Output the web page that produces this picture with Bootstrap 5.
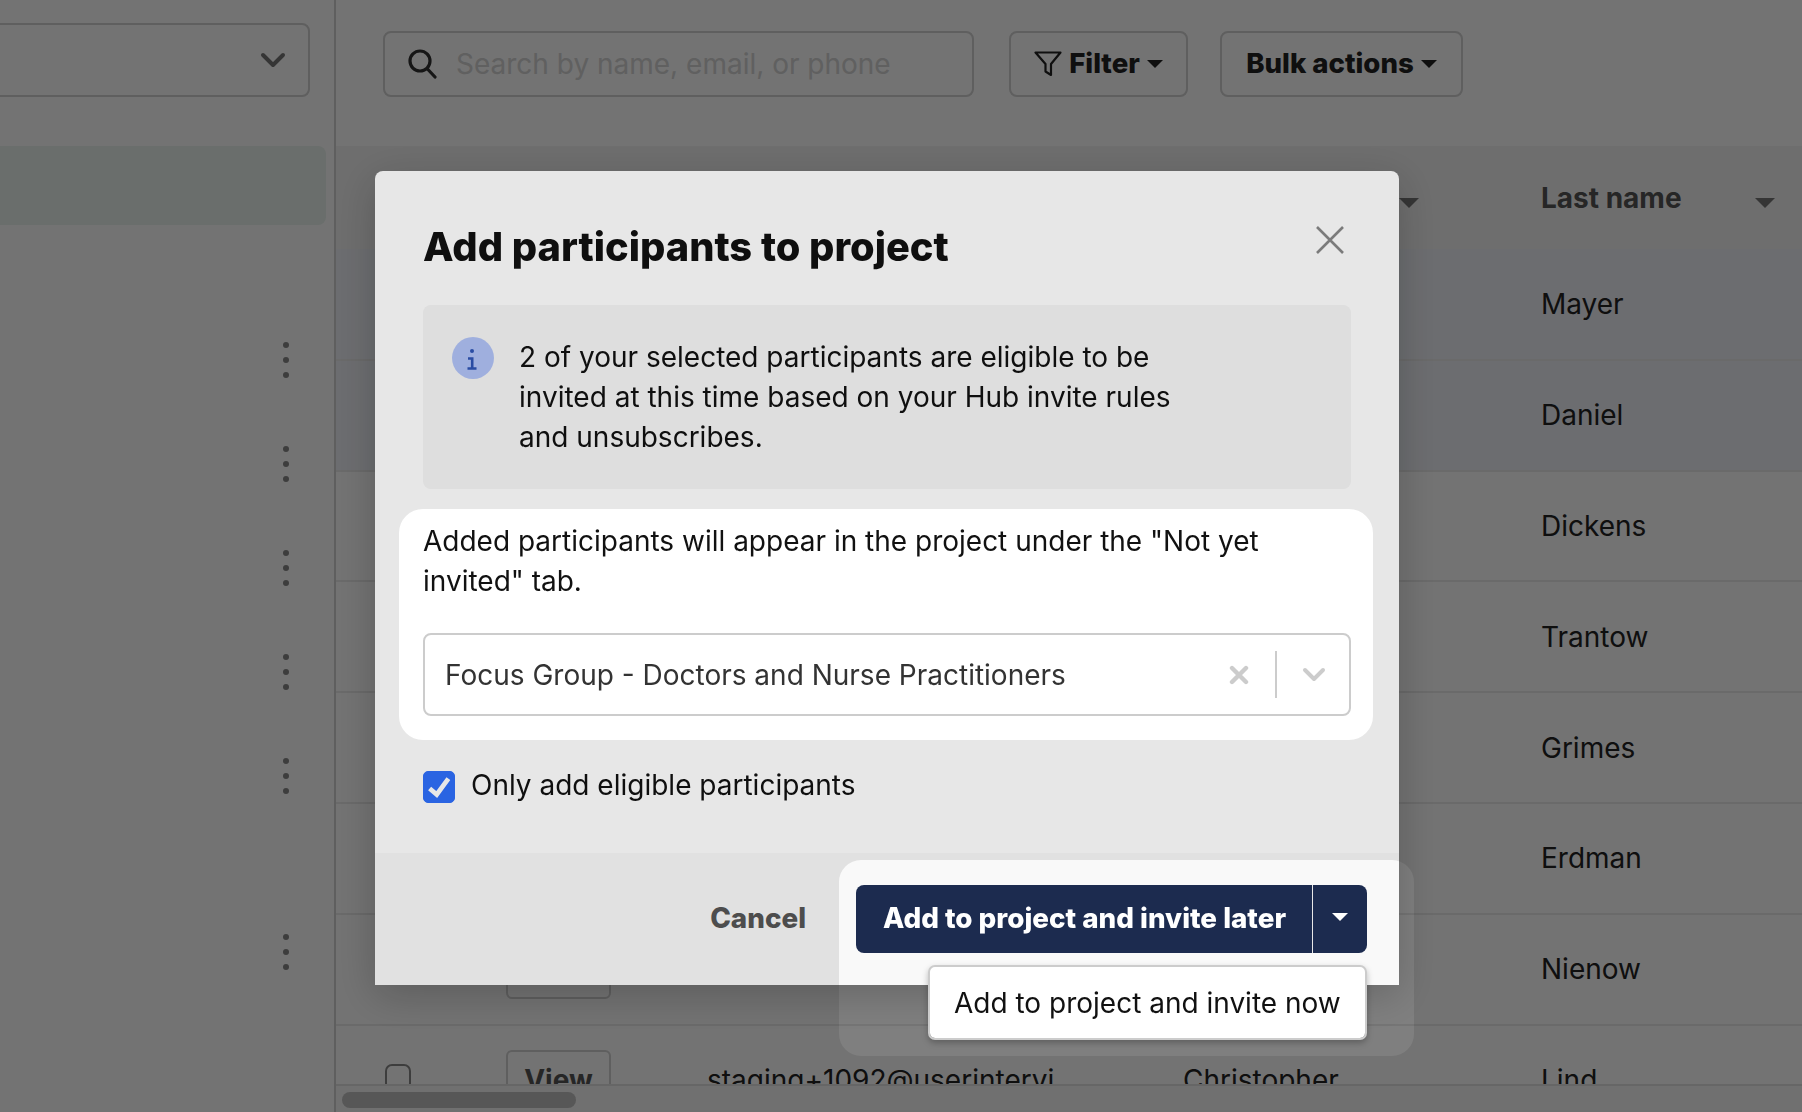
<!DOCTYPE html>
<html lang="en">
<head>
<meta charset="utf-8">
<title>Add participants to project</title>
<link href="https://cdn.jsdelivr.net/npm/bootstrap@5.3.0/dist/css/bootstrap.min.css" rel="stylesheet">
<style>
html,body{height:1112px;overflow:hidden;}
body{font-family:Inter,"Liberation Sans",sans-serif;font-size:28px;line-height:40px;color:#222;background:#fff;}
.app-shell{height:1112px;}
.side-pane{width:336px;flex:none;border-right:2px solid #d2d2d2;padding-top:23px;overflow:hidden;}
.side-select{height:74px;width:330px;margin-left:-20px;border:2px solid #d2d2d2;border-radius:8px;padding-right:22px;}
.side-active{height:79px;width:346px;margin:49px 0 0 -20px;border-radius:8px;background:#ecf5f0;}
.side-list{margin-top:83px;}
.side-row{height:104px;padding-right:45px;}
.side-row-far{margin-top:72px;}
.main-pane{min-width:0;}
.tool-row{height:146px;padding:31px 0 0 47px;gap:32px;flex:none;}
.search-box{width:591px;height:66px;border:2px solid #d2d2d2;border-radius:8px;padding-left:23px;gap:19px;}
.search-box input{border:0;outline:0;background:transparent;flex:1;font-size:28px;padding:0;min-width:0;}
.search-box input::placeholder{color:#d4d4d4;opacity:1;}
.tool-btn{height:66px;border:2px solid #d2d2d2;border-radius:8px;font-size:27.6px;font-weight:800;color:#222;line-height:1;display:inline-flex;align-items:center;justify-content:center;padding:0;}
.tool-btn.filter-btn{width:179px;margin-left:3px;}
.filter-shape{margin-right:7px;}
.tool-btn.bulk-btn{width:243px;}
.table-clip{flex:1;overflow:hidden;min-height:0;}
.people-table{table-layout:fixed;width:1466px;margin:0;border-collapse:collapse;--bs-table-bg:transparent;--bs-table-color:#222;}
.people-table th,.people-table td{padding:0 0 0 15px;vertical-align:middle;border-bottom:2px solid #eaeaea;font-size:28px;line-height:40px;white-space:nowrap;overflow:hidden;}
.people-table thead th{height:103px;background:#f5f5f5;font-weight:700;color:#555;border-bottom:0;}
.people-table tbody td{height:110.8px;}
.people-table .chosen td{background:#f0f3f9;}
.people-table td.tick-cell,.people-table th.tick-cell{padding-left:49px;}
.tick-box{display:block;width:26px;height:26px;margin:0 0 6px;border:2px solid #888;border-radius:4px;}
.view-btn{display:block;width:105px;height:60px;margin-left:-1px;border:2px solid #d2d2d2;border-radius:6px;font-size:28px;font-weight:700;color:#555;padding:0;}
.sort-head{display:flex;justify-content:space-between;align-items:center;width:234px;}
.sort-head-wide{width:236px;}
.sort-caret{width:0;height:0;border-left:10px solid transparent;border-right:10px solid transparent;border-top:10px solid #777;margin-top:10px;}
.scroll-track{height:28px;flex:none;background:#f8f8f8;border-top:2px solid #e2e2e2;padding:6px 0 0 6px;}
.scroll-thumb{width:234px;height:16px;border-radius:8px;background:#c2c2c2;}
.dialog-place{max-width:1024px;margin:171px 0 0 375px;}
.dialog-box{border:0;border-radius:8px 8px 0 0;background:#fff;box-shadow:0 10px 40px rgba(0,0,0,.2);color:#111;}
.dialog-head{padding:48px 48px 0;height:134px;border:0;align-items:flex-start;}
.dialog-title{font-size:39.8px;line-height:56px;font-weight:800;margin:0;color:#111;}
.close-x{margin-top:6px;margin-right:6px;border:0;padding:0;line-height:0;background:none;}
.dialog-main{padding:0 48px;height:548px;flex:none;}
.info-panel{height:184px;background:#f5f5f5;border-radius:8px;padding:32px 29px;gap:25px;}
.info-dot{width:42px;height:42px;flex:none;}
.info-copy{max-width:690px;}
.group-note{margin-top:32px;}
.group-picker{height:83px;margin-top:32px;border:2px solid #ccc;border-radius:8px;padding-left:20px;color:#333;}
.picker-rule{width:2px;height:47px;background:#ccc;margin:0 25px 0 26px;}
.picker-arrow{margin-right:23px;}
.form-check.only-row{margin-top:55px;gap:16px;min-height:0;height:32px;}
.form-check .form-check-input.only-tick{width:32px;height:32px;margin:0;float:none;flex:none;border-radius:5px;background-color:#2f6ffa;border-color:#2f6ffa;background-size:100% 100%;background-image:url("data:image/svg+xml,%3Csvg xmlns='http://www.w3.org/2000/svg' viewBox='0 0 32 32'%3E%3Cpath d='M6 17.5l7.6 6.5L26 7' fill='none' stroke='%23fff' stroke-width='5'/%3E%3C/svg%3E");}
.only-text{margin-top:-4px;}
.dialog-foot{height:132px;padding:32px 32px 32px 0;background:#f9f9f9;border:0;border-radius:0;justify-content:flex-end;align-items:flex-start;flex-wrap:nowrap;gap:50px;}
.dialog-foot>*{margin:0;}
.cancel-link{font-size:27.8px;font-weight:800;color:#555;padding:0;border:0;height:68px;}
.save-btn{background:#1c2b4f;border:0;color:#fff;font-size:27.8px;font-weight:800;height:68px;line-height:1;border-radius:8px;}
.save-btn:hover,.save-btn:active{background:#1c2b4f;color:#fff;}
.save-main{width:457px;padding:0;}
.save-more{width:55px;padding:0;border-left:1px solid #e8e8e8!important;}
.save-more::after{margin:0;}
.later-menu{position:absolute;top:80px;right:0;left:auto;width:439px;height:75px;padding:0;border:2px solid #ccc;border-radius:7px;box-shadow:0 3px 6px rgba(0,0,0,.25);font-size:28px;}
.later-menu .dropdown-item{height:71px;padding:0 24px;display:flex;align-items:center;color:#111;}
.spot-layer{position:fixed;inset:0;width:1802px;height:1112px;z-index:1080;pointer-events:none;}
</style>
</head>
<body>
<div class="app-shell d-flex">
  <aside class="side-pane">
    <div class="side-select d-flex align-items-center justify-content-end">
      <svg width="26" height="16" viewBox="0 0 26 16" fill="none" stroke="#777" stroke-width="4" stroke-linecap="round" stroke-linejoin="round"><path d="M3 3l10 10L23 3"/></svg>
    </div>
    <div class="side-active"></div>
    <div class="side-list">
      <div class="side-row d-flex align-items-center justify-content-end"><svg width="6" height="36" viewBox="0 0 6 36" fill="#888"><circle cx="3" cy="3" r="3"/><circle cx="3" cy="18" r="3"/><circle cx="3" cy="33" r="3"/></svg></div>
      <div class="side-row d-flex align-items-center justify-content-end"><svg width="6" height="36" viewBox="0 0 6 36" fill="#888"><circle cx="3" cy="3" r="3"/><circle cx="3" cy="18" r="3"/><circle cx="3" cy="33" r="3"/></svg></div>
      <div class="side-row d-flex align-items-center justify-content-end"><svg width="6" height="36" viewBox="0 0 6 36" fill="#888"><circle cx="3" cy="3" r="3"/><circle cx="3" cy="18" r="3"/><circle cx="3" cy="33" r="3"/></svg></div>
      <div class="side-row d-flex align-items-center justify-content-end"><svg width="6" height="36" viewBox="0 0 6 36" fill="#888"><circle cx="3" cy="3" r="3"/><circle cx="3" cy="18" r="3"/><circle cx="3" cy="33" r="3"/></svg></div>
      <div class="side-row d-flex align-items-center justify-content-end"><svg width="6" height="36" viewBox="0 0 6 36" fill="#888"><circle cx="3" cy="3" r="3"/><circle cx="3" cy="18" r="3"/><circle cx="3" cy="33" r="3"/></svg></div>
      <div class="side-row side-row-far d-flex align-items-center justify-content-end"><svg width="6" height="36" viewBox="0 0 6 36" fill="#888"><circle cx="3" cy="3" r="3"/><circle cx="3" cy="18" r="3"/><circle cx="3" cy="33" r="3"/></svg></div>
    </div>
  </aside>
  <main class="main-pane flex-grow-1 d-flex flex-column">
    <div class="tool-row d-flex align-items-start">
      <div class="search-box d-flex align-items-center">
        <svg width="29" height="30" viewBox="0 0 29 30" fill="none" stroke="#333" stroke-width="3.2" stroke-linecap="round"><circle cx="12" cy="12" r="10"/><path d="M19.5 20l7.5 8"/></svg>
        <input type="text" placeholder="Search by name, email, or phone" aria-label="Search">
      </div>
      <button type="button" class="btn tool-btn filter-btn dropdown-toggle">
        <svg class="filter-shape" width="28" height="26" viewBox="0 0 28 26" fill="none" stroke="#222" stroke-width="2.2" stroke-linejoin="round"><path d="M1.5 1.5h25L17 13v11l-5.5-3.5V13z"/></svg>Filter</button>
      <button type="button" class="btn tool-btn bulk-btn dropdown-toggle">Bulk actions</button>
    </div>
    <div class="table-clip">
      <table class="table people-table">
        <colgroup><col style="width:156px"><col style="width:200px"><col style="width:476px"><col style="width:358px"><col style="width:276px"></colgroup>
        <thead>
          <tr><th class="tick-cell"></th><th></th><th></th><th><div class="sort-head sort-head-wide"><span class="opacity-0"></span><span class="sort-caret"></span></div></th><th><div class="sort-head"><span>Last name</span><span class="sort-caret"></span></div></th></tr>
        </thead>
        <tbody>
          <tr class="chosen"><td class="tick-cell"></td><td></td><td></td><td></td><td>Mayer</td></tr>
          <tr class="chosen"><td class="tick-cell"></td><td></td><td></td><td></td><td>Daniel</td></tr>
          <tr><td class="tick-cell"></td><td></td><td></td><td></td><td>Dickens</td></tr>
          <tr><td class="tick-cell"></td><td></td><td></td><td></td><td>Trantow</td></tr>
          <tr><td class="tick-cell"></td><td></td><td></td><td></td><td>Grimes</td></tr>
          <tr><td class="tick-cell"></td><td></td><td></td><td></td><td>Erdman</td></tr>
          <tr><td class="tick-cell"></td><td><button class="btn view-btn" type="button" aria-label="View"></button></td><td></td><td></td><td>Nienow</td></tr>
          <tr><td class="tick-cell"><input class="form-check-input tick-box" type="checkbox" aria-label="Select"></td><td><button class="btn view-btn" type="button">View</button></td><td>staging+1092@userintervi</td><td>Christopher</td><td>Lind</td></tr>
        </tbody>
      </table>
    </div>
    <div class="scroll-track"><div class="scroll-thumb"></div></div>
  </main>
</div>

<div class="modal-backdrop show"></div>
<div class="modal d-block" tabindex="-1">
  <div class="modal-dialog dialog-place">
    <div class="modal-content dialog-box">
      <div class="modal-header dialog-head">
        <h1 class="modal-title dialog-title">Add participants to project</h1>
        <button type="button" class="close-x ms-auto" aria-label="Close">
          <svg width="30" height="30" viewBox="0 0 30 30" fill="none" stroke="#888" stroke-width="2.6"><path d="M2 2l26 26M28 2L2 28"/></svg>
        </button>
      </div>
      <div class="modal-body dialog-main">
        <div class="info-panel d-flex align-items-start">
          <svg class="info-dot" viewBox="0 0 42 42"><circle cx="21" cy="21" r="21" fill="#b0c2f5"/><circle cx="20" cy="14" r="2" fill="#2f54b4"/><path d="M16 21.5h4.2V31.5M15.5 31.5h9" fill="none" stroke="#2f54b4" stroke-width="2.6"/></svg>
          <div class="info-copy">2 of your selected participants are eligible to be invited at this time based on your Hub invite rules and unsubscribes.</div>
        </div>
        <div class="group-note">Added participants will appear in the project under the "Not yet invited" tab.</div>
        <div class="group-picker d-flex align-items-center justify-content-between">
          <span>Focus Group - Doctors and Nurse Practitioners</span>
          <span class="d-flex align-items-center">
            <svg width="20" height="20" viewBox="0 0 20 20" fill="none" stroke="#ccc" stroke-width="4.4" stroke-linecap="round"><path d="M3 3l14 14M17 3L3 17"/></svg>
            <span class="picker-rule"></span>
            <svg class="picker-arrow" width="24" height="15" viewBox="0 0 24 15" fill="none" stroke="#ccc" stroke-width="4" stroke-linecap="round" stroke-linejoin="round"><path d="M3 3l9 9 9-9"/></svg>
          </span>
        </div>
        <div class="only-row form-check d-flex align-items-center p-0">
          <input class="form-check-input only-tick" type="checkbox" id="onlyEligible" checked>
          <label class="form-check-label only-text" for="onlyEligible">Only add eligible participants</label>
        </div>
      </div>
      <div class="modal-footer dialog-foot">
        <button type="button" class="btn cancel-link">Cancel</button>
        <div class="btn-group">
          <button type="button" class="btn save-btn save-main">Add to project and invite later</button>
          <button type="button" class="btn save-btn save-more dropdown-toggle dropdown-toggle-split" aria-label="More options"></button>
          <div class="dropdown-menu show later-menu"><a class="dropdown-item" href="#">Add to project and invite now</a></div>
        </div>
      </div>
    </div>
  </div>
</div>
<svg class="spot-layer" viewBox="0 0 1802 1112" aria-hidden="true">
  <path fill="#000" fill-opacity=".094" fill-rule="evenodd" d="M0 0H1802V1112H0Z M423 509H1349A24 24 0 0 1 1373 533V716A24 24 0 0 1 1349 740H423A24 24 0 0 1 399 716V533A24 24 0 0 1 423 509Z M861 860H1392A22 22 0 0 1 1414 882V1034A22 22 0 0 1 1392 1056H861A22 22 0 0 1 839 1034V882A22 22 0 0 1 861 860Z"/>
</svg>
<script src="https://cdn.jsdelivr.net/npm/bootstrap@5.3.0/dist/js/bootstrap.bundle.min.js"></script>
</body>
</html>
